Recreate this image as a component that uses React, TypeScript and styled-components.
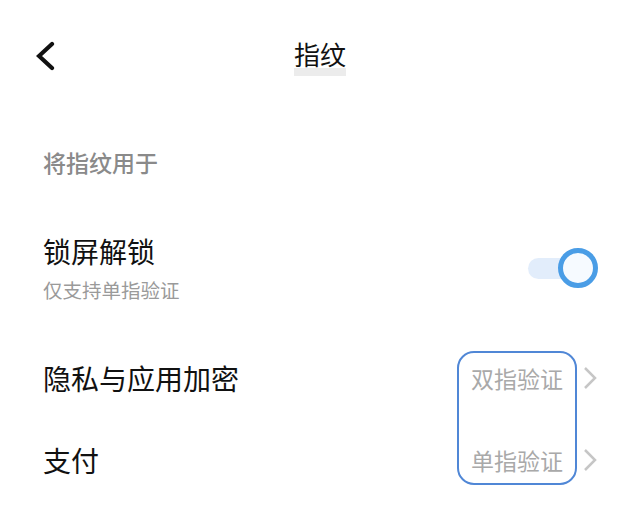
import styled, { createGlobalStyle } from "styled-components";

const GlobalStyle = createGlobalStyle`
  html, body {
    margin: 0;
    padding: 0;
    background: #ffffff;
  }
  body {
    font-family: "Noto Sans CJK SC", "Noto Sans", sans-serif;
    color: #111111;
  }
`;

const Page = styled.div`
  width: 640px;
  height: 514px;
  overflow: hidden;
  background: #ffffff;
`;

const Header = styled.header`
  display: grid;
  grid-template-columns: 1fr auto 1fr;
  align-items: center;
  height: 112px;
`;

const BackButton = styled.button`
  justify-self: start;
  display: flex;
  align-items: center;
  border: 0;
  background: none;
  padding: 0 0 0 36px;
  cursor: pointer;
`;

const Title = styled.h1`
  margin: 0;
  font-size: 26px;
  font-weight: 400;
  line-height: 36px;
  padding-bottom: 4px;
  color: #111111;
  background: linear-gradient(to bottom, transparent 32px, #ececec 32px);
`;

const SectionTitle = styled.div`
  margin: 34px 0 21px;
  padding: 0 43px;
  font-size: 23px;
  line-height: 32px;
  font-weight: 500;
  color: #8a8a8a;
`;

const List = styled.div`
  position: relative;
`;

const Row = styled.div<{ $pad: number }>`
  display: flex;
  align-items: center;
  justify-content: space-between;
  padding: ${(p) => p.$pad}px 43px ${(p) => p.$pad}px 43px;
`;

const Texts = styled.div`
  display: flex;
  flex-direction: column;
  gap: 8px;
`;

const RowTitle = styled.div`
  font-size: 28px;
  line-height: 36px;
  color: #111111;
`;

const RowSub = styled.div`
  font-size: 19.5px;
  line-height: 26px;
  color: #9a9a9a;
`;

const Value = styled.div`
  display: flex;
  align-items: center;
  gap: 20px;
  font-size: 23px;
  line-height: 32px;
  color: #a9a9a9;
`;

const Toggle = styled.div`
  position: relative;
  width: 70px;
  height: 40px;
  margin-right: -1px;
`;

const Track = styled.div`
  position: absolute;
  left: 0;
  top: 10px;
  width: 50px;
  height: 21px;
  border-radius: 11px;
  background: #e2edfb;
`;

const Knob = styled.div`
  position: absolute;
  right: 0;
  top: 0;
  width: 40px;
  height: 40px;
  box-sizing: border-box;
  border-radius: 50%;
  border: 5px solid #4a9de6;
  background: #f6faff;
`;

const Highlight = styled.div`
  position: absolute;
  left: 457px;
  top: 14px;
  width: 120px;
  height: 134px;
  box-sizing: border-box;
  border: 2px solid #5087d6;
  border-radius: 17px;
  pointer-events: none;
`;

const BackIcon = () => (
  <svg width="20" height="32" viewBox="0 0 20 32">
    <polyline
      points="16,4 3,16 16,28"
      fill="none"
      stroke="#111"
      strokeWidth="4.2"
      strokeLinejoin="miter"
      strokeLinecap="round"
    />
  </svg>
);

const Chevron = () => (
  <svg width="14" height="24" viewBox="0 0 14 24">
    <polyline
      points="2,2 12,12 2,22"
      fill="none"
      stroke="#c6c6c6"
      strokeWidth="2.5"
      strokeLinejoin="miter"
    />
  </svg>
);

export default function App() {
  return (
    <Page>
      <GlobalStyle />
      <Header>
        <BackButton aria-label="back">
          <BackIcon />
        </BackButton>
        <Title>指纹</Title>
        <div />
      </Header>

      <SectionTitle>将指纹用于</SectionTitle>

      <Row $pad={34}>
        <Texts>
          <RowTitle>锁屏解锁</RowTitle>
          <RowSub>仅支持单指验证</RowSub>
        </Texts>
        <Toggle>
          <Track />
          <Knob />
        </Toggle>
      </Row>

      <List>
        <Row $pad={23}>
          <RowTitle>隐私与应用加密</RowTitle>
          <Value>
            双指验证
            <Chevron />
          </Value>
        </Row>
        <Row $pad={23}>
          <RowTitle>支付</RowTitle>
          <Value>
            单指验证
            <Chevron />
          </Value>
        </Row>
        <Highlight />
      </List>
    </Page>
  );
}
